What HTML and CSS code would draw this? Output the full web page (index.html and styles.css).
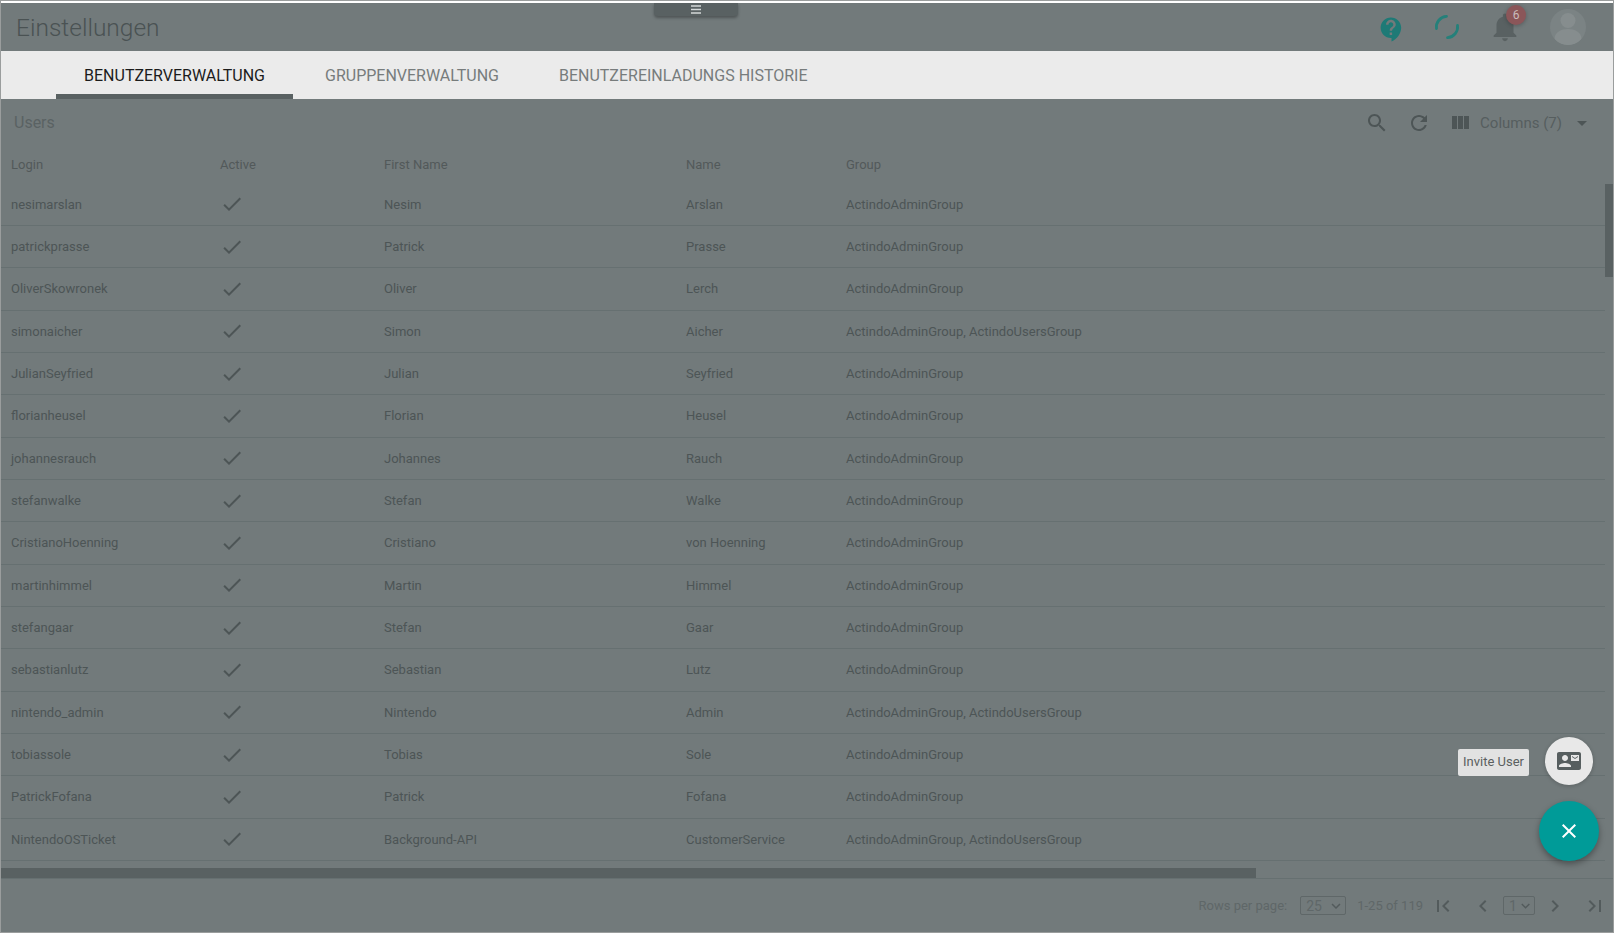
FILE: index.html
```html
<!DOCTYPE html>
<html>

<head>
  <meta charset="utf-8">
  <title>Einstellungen</title>
  <link rel="stylesheet" href="styles.css">
</head>

<body>
  <div class="app">
    <header class="topbar">
      <h1 class="page-title">Einstellungen</h1>
      <div class="menu-handle">
        <svg width="12" height="10" viewBox="0 0 12 10"><path d="M1 1h10M1 4.5h10M1 8h10" stroke="#d4d8d8" stroke-width="1.6"/></svg>
      </div>
      <div class="topbar-icons">
        <svg class="icon-help" width="29" height="29" viewBox="0 0 24 24"><path fill="#1e7a76" d="M11.5 2C6.81 2 3 5.81 3 10.5S6.81 19 11.5 19h.5v3c4.86-2.34 8-7 8-11.5C20 5.81 16.19 2 11.5 2zm1 14.5h-2v-2h2v2zm0-3.5h-2c0-3.25 3-3 3-5 0-1.1-.9-2-2-2s-2 .9-2 2h-2c0-2.21 1.79-4 4-4s4 1.79 4 4c0 2.5-3 2.75-3 5z"/></svg>
        <svg class="icon-spinner" width="26" height="26" viewBox="0 0 26 26"><g fill="none" stroke="#25807a" stroke-width="2.800" stroke-linecap="round"><path d="M2.500 14.500A10.600 10.600 0 0 1 12.500 2.400"/><path d="M23.500 11.500A10.600 10.600 0 0 1 13.500 23.600"/></g></svg>
        <div class="bell">
          <svg width="34" height="34" viewBox="0 0 24 24"><path fill="#596162" d="M12 22c1.1 0 2-.9 2-2h-4c0 1.1.89 2 2 2zm6-6v-5c0-3.07-1.64-5.64-4.5-6.32V4c0-.83-.67-1.5-1.5-1.5s-1.5.67-1.5 1.5v.68C7.63 5.36 6 7.92 6 11v5l-2 2v1h16v-1l-2-2z"/></svg>
          <span class="badge">6</span>
        </div>
        <div class="avatar">
          <svg width="36" height="36" viewBox="0 0 36 36"><circle cx="18" cy="11.5" r="7.5" fill="#868d8e"/><path fill="#868d8e" d="M4.5 30c0-7 7-10 13.500-10s13.500 3 13.500 10c-3 4-8 6-13.500 6s-10.500-2-13.500-6z"/></svg>
        </div>
      </div>
    </header>

    <nav class="tabs">
      <a class="tab tab-active">BENUTZERVERWALTUNG</a>
      <a class="tab">GRUPPENVERWALTUNG</a>
      <a class="tab">BENUTZEREINLADUNGS HISTORIE</a>
    </nav>

    <main class="panel">
      <div class="toolbar">
        <span class="toolbar-title">Users</span>
        <div class="toolbar-actions">
          <svg class="tool-search" width="24" height="24" viewBox="0 0 24 24"><path d="M15.5 14h-.79l-.28-.27C15.41 12.59 16 11.11 16 9.500 16 5.910 13.090 3 9.500 3S3 5.910 3 9.500 5.910 16 9.500 16c1.610 0 3.090-.59 4.230-1.570l.27.28v.79l5 4.990L20.490 19l-4.990-5zm-6 0C7.010 14 5 11.990 5 9.500S7.010 5 9.500 5 14 7.010 14 9.500 11.990 14 9.500 14z"/></svg>
          <svg class="tool-refresh" width="24" height="24" viewBox="0 0 24 24"><path d="M17.650 6.350C16.200 4.900 14.210 4 12 4c-4.420 0-7.990 3.580-7.990 8s3.570 8 7.990 8c3.730 0 6.840-2.550 7.730-6h-2.080c-.82 2.330-3.040 4-5.650 4-3.310 0-6-2.690-6-6s2.690-6 6-6c1.660 0 3.140.69 4.220 1.780L13 11h7V4l-2.350 2.350z"/></svg>
          <svg class="tool-columns" width="24" height="24" viewBox="0 0 24 24"><path d="M10 18h5V5h-5v13zm-6 0h5V5H4v13zM16 5v13h5V5h-5z"/></svg>
          <span class="columns-label">Columns (7)</span>
          <svg class="tool-drop" width="24" height="24" viewBox="0 0 24 24"><path d="M7 10l5 5 5-5z"/></svg>
        </div>
      </div>

      <div class="table">
        <div class="row row-head">
          <span>Login</span><span>Active</span><span>First Name</span><span>Name</span><span>Group</span>
        </div>
        <div class="row"><span>nesimarslan</span><svg class="check" width="24" height="24" viewBox="0 0 24 24"><path d="M9 16.170L4.830 12l-1.420 1.410L9 19 21 7l-1.410-1.410z"/></svg><span>Nesim</span><span>Arslan</span><span>ActindoAdminGroup</span></div>
        <div class="row"><span>patrickprasse</span><svg class="check" width="24" height="24" viewBox="0 0 24 24"><path d="M9 16.170L4.830 12l-1.420 1.410L9 19 21 7l-1.410-1.410z"/></svg><span>Patrick</span><span>Prasse</span><span>ActindoAdminGroup</span></div>
        <div class="row"><span>OliverSkowronek</span><svg class="check" width="24" height="24" viewBox="0 0 24 24"><path d="M9 16.170L4.830 12l-1.420 1.410L9 19 21 7l-1.410-1.410z"/></svg><span>Oliver</span><span>Lerch</span><span>ActindoAdminGroup</span></div>
        <div class="row"><span>simonaicher</span><svg class="check" width="24" height="24" viewBox="0 0 24 24"><path d="M9 16.170L4.830 12l-1.420 1.410L9 19 21 7l-1.410-1.410z"/></svg><span>Simon</span><span>Aicher</span><span>ActindoAdminGroup, ActindoUsersGroup</span></div>
        <div class="row"><span>JulianSeyfried</span><svg class="check" width="24" height="24" viewBox="0 0 24 24"><path d="M9 16.170L4.830 12l-1.420 1.410L9 19 21 7l-1.410-1.410z"/></svg><span>Julian</span><span>Seyfried</span><span>ActindoAdminGroup</span></div>
        <div class="row"><span>florianheusel</span><svg class="check" width="24" height="24" viewBox="0 0 24 24"><path d="M9 16.170L4.830 12l-1.420 1.410L9 19 21 7l-1.410-1.410z"/></svg><span>Florian</span><span>Heusel</span><span>ActindoAdminGroup</span></div>
        <div class="row"><span>johannesrauch</span><svg class="check" width="24" height="24" viewBox="0 0 24 24"><path d="M9 16.170L4.830 12l-1.420 1.410L9 19 21 7l-1.410-1.410z"/></svg><span>Johannes</span><span>Rauch</span><span>ActindoAdminGroup</span></div>
        <div class="row"><span>stefanwalke</span><svg class="check" width="24" height="24" viewBox="0 0 24 24"><path d="M9 16.170L4.830 12l-1.420 1.410L9 19 21 7l-1.410-1.410z"/></svg><span>Stefan</span><span>Walke</span><span>ActindoAdminGroup</span></div>
        <div class="row"><span>CristianoHoenning</span><svg class="check" width="24" height="24" viewBox="0 0 24 24"><path d="M9 16.170L4.830 12l-1.420 1.410L9 19 21 7l-1.410-1.410z"/></svg><span>Cristiano</span><span>von Hoenning</span><span>ActindoAdminGroup</span></div>
        <div class="row"><span>martinhimmel</span><svg class="check" width="24" height="24" viewBox="0 0 24 24"><path d="M9 16.170L4.830 12l-1.420 1.410L9 19 21 7l-1.410-1.410z"/></svg><span>Martin</span><span>Himmel</span><span>ActindoAdminGroup</span></div>
        <div class="row"><span>stefangaar</span><svg class="check" width="24" height="24" viewBox="0 0 24 24"><path d="M9 16.170L4.830 12l-1.420 1.410L9 19 21 7l-1.410-1.410z"/></svg><span>Stefan</span><span>Gaar</span><span>ActindoAdminGroup</span></div>
        <div class="row"><span>sebastianlutz</span><svg class="check" width="24" height="24" viewBox="0 0 24 24"><path d="M9 16.170L4.830 12l-1.420 1.410L9 19 21 7l-1.410-1.410z"/></svg><span>Sebastian</span><span>Lutz</span><span>ActindoAdminGroup</span></div>
        <div class="row"><span>nintendo_admin</span><svg class="check" width="24" height="24" viewBox="0 0 24 24"><path d="M9 16.170L4.830 12l-1.420 1.410L9 19 21 7l-1.410-1.410z"/></svg><span>Nintendo</span><span>Admin</span><span>ActindoAdminGroup, ActindoUsersGroup</span></div>
        <div class="row"><span>tobiassole</span><svg class="check" width="24" height="24" viewBox="0 0 24 24"><path d="M9 16.170L4.830 12l-1.420 1.410L9 19 21 7l-1.410-1.410z"/></svg><span>Tobias</span><span>Sole</span><span>ActindoAdminGroup</span></div>
        <div class="row"><span>PatrickFofana</span><svg class="check" width="24" height="24" viewBox="0 0 24 24"><path d="M9 16.170L4.830 12l-1.420 1.410L9 19 21 7l-1.410-1.410z"/></svg><span>Patrick</span><span>Fofana</span><span>ActindoAdminGroup</span></div>
        <div class="row"><span>NintendoOSTicket</span><svg class="check" width="24" height="24" viewBox="0 0 24 24"><path d="M9 16.170L4.830 12l-1.420 1.410L9 19 21 7l-1.410-1.410z"/></svg><span>Background-API</span><span>CustomerService</span><span>ActindoAdminGroup, ActindoUsersGroup</span></div>
        <div class="scroll-v"></div>
      </div>

      <div class="scroll-h"><div class="scroll-h-thumb"></div></div>

      <footer class="pager">
        <span class="pager-label">Rows per page:</span>
        <span class="pager-select pager-select-rows">25 <svg width="18" height="18" viewBox="0 0 24 24"><path d="M16.590 8.590L12 13.170 7.410 8.590 6 10l6 6 6-6z"/></svg></span>
        <span class="pager-range">1-25 of 119</span>
        <svg class="pager-first" width="24" height="24" viewBox="0 0 24 24"><path d="M18.410 16.590L13.820 12l4.590-4.590L17 6l-6 6 6 6zM6 6h2v12H6z"/></svg>
        <svg class="pager-prev" width="24" height="24" viewBox="0 0 24 24"><path d="M15.410 7.410L14 6l-6 6 6 6 1.410-1.410L10.830 12z"/></svg>
        <span class="pager-select pager-select-page">1 <svg width="18" height="18" viewBox="0 0 24 24"><path d="M16.590 8.590L12 13.170 7.410 8.590 6 10l6 6 6-6z"/></svg></span>
        <svg class="pager-next" width="24" height="24" viewBox="0 0 24 24"><path d="M10 6L8.590 7.410 13.170 12l-4.580 4.590L10 18l6-6z"/></svg>
        <svg class="pager-last" width="24" height="24" viewBox="0 0 24 24"><path d="M5.590 7.410L10.180 12l-4.590 4.590L7 18l6-6-6-6zM16 6h2v12h-2z"/></svg>
      </footer>
    </main>

    <div class="tooltip">Invite User</div>
    <button class="fab-small">
      <svg width="24" height="24" viewBox="0 0 24 24"><path fill="#565e5f" d="M21 8V7l-3 2-3-2v1l3 2 3-2zm1-5H2C.9 3 0 3.9 0 5v14c0 1.100.9 2 2 2h20c1.100 0 1.990-.9 1.990-2L24 5c0-1.100-.9-2-2-2zM8 6c1.660 0 3 1.340 3 3s-1.340 3-3 3-3-1.340-3-3 1.340-3 3-3zm6 12H2v-1c0-2 4-3 6-3s6 1 6 3v1zm8-6h-8V6h8v6z"/></svg>
    </button>
    <button class="fab">
      <svg width="24" height="24" viewBox="0 0 24 24"><path fill="#fff" d="M19 6.410L17.590 5 12 10.590 6.410 5 5 6.410 10.590 12 5 17.590 6.410 19 12 13.410 17.590 19 19 17.590 13.410 12z"/></svg>
    </button>
  </div>
</body>

</html>
```

FILE: styles.css
```css
html,
body {
  margin: 0;
  height: 100%;
}

body {
  font-family: Roboto, sans-serif;
  color: #4d5556;
  overflow: hidden;
}

.app {
  position: relative;
  display: flex;
  flex-direction: column;
  height: 933px;
  box-sizing: border-box;
  border: 1px solid #9a9d9d;
  background: #727a7b;
  overflow: hidden;
}

/* top bar */
.topbar {
  display: flex;
  align-items: center;
  justify-content: space-between;
  height: 48px;
  flex-shrink: 0;
  border-top: 2px solid #ffffff;
  background: #727a7b;
}

.page-title {
  margin: 0 0 0 15px;
  font-size: 24.5px;
  font-weight: 300;
  color: #4a5253;
}

.menu-handle {
  position: absolute;
  top: 2px;
  left: 653px;
  width: 84px;
  height: 13px;
  display: flex;
  align-items: center;
  justify-content: center;
  background: #596162;
  border-radius: 0 0 4px 4px;
  box-shadow: 0 2px 3px rgba(0, 0, 0, 0.3);
}

.topbar-icons {
  display: flex;
  align-items: center;
  height: 100%;
}

.icon-help {
  margin-top: 4px;
  margin-right: 28px;
}

.icon-spinner {
  margin-right: 28px;
}

.bell {
  position: relative;
  height: 34px;
  margin-right: 28px;
}

.bell svg {
  display: block;
}

.badge {
  position: absolute;
  top: -5px;
  right: -4px;
  width: 20px;
  height: 20px;
  border-radius: 50%;
  background: #8b5659;
  color: #c9bcbc;
  font-size: 12px;
  line-height: 20px;
  text-align: center;
  box-shadow: 0 1px 4px rgba(0, 0, 0, 0.25);
}

.avatar {
  width: 36px;
  height: 36px;
  margin-right: 27px;
  border-radius: 50%;
  background: #7b8384;
  overflow: hidden;
}

.avatar svg {
  display: block;
}

/* tabs */
.tabs {
  display: flex;
  height: 48px;
  flex-shrink: 0;
  padding-left: 55px;
  background: #ebebeb;
}

.tab {
  display: flex;
  align-items: center;
  justify-content: center;
  box-sizing: border-box;
  height: 48px;
  padding: 6px 28px 0 32px;
  font-size: 16px;
  color: #777c7c;
  border-bottom: 5px solid transparent;
}

.tab-active {
  width: 237px;
  padding: 6px 0 0;
  color: #1c1c1c;
  border-bottom-color: #596162;
}

/* panel */
.panel {
  flex: 1;
  display: flex;
  flex-direction: column;
  min-height: 0;
}

.toolbar {
  display: flex;
  align-items: center;
  justify-content: space-between;
  height: 46px;
  flex-shrink: 0;
  padding: 0 19px 0 13px;
}

.toolbar-title {
  font-size: 16px;
  color: #5a6263;
}

.toolbar-actions {
  display: flex;
  align-items: center;
  padding-top: 1px;
}

.toolbar-actions svg {
  fill: #4d5556;
}

.tool-search {
  margin-right: 18px;
}

.tool-refresh {
  margin-right: 17px;
}

.tool-columns {
  margin-right: 8px;
}

.columns-label {
  margin-right: 8px;
  font-size: 15px;
  color: #565e5f;
}

.table {
  position: relative;
  flex: 1;
  min-height: 0;
  overflow: hidden;
}

.row {
  display: grid;
  grid-template-columns: 209px 164px 302px 160px 1fr;
  align-items: center;
  box-sizing: border-box;
  height: 42.35px;
  margin-right: 8px;
  padding-left: 10px;
  font-size: 13px;
  border-bottom: 1px solid #667071;
}

.row-head {
  height: 38.5px;
  border-bottom: 0;
  color: #52595a;
}

.check {
  fill: #4d5556;
}

.scroll-v {
  position: absolute;
  top: 39px;
  right: 0;
  width: 8px;
  height: 93px;
  background: #596162;
}

.scroll-h {
  height: 10px;
  flex-shrink: 0;
  border-bottom: 1px solid #667071;
}

.scroll-h-thumb {
  width: 1255px;
  height: 10px;
  background: #596162;
}

/* pager */
.pager {
  display: flex;
  align-items: center;
  justify-content: flex-end;
  height: 53px;
  flex-shrink: 0;
  padding-right: 6px;
  font-size: 13px;
  color: #5f6768;
}

.pager svg {
  fill: #535b5c;
}

.pager-label {
  margin-right: 13px;
}

.pager-select {
  display: flex;
  align-items: center;
  justify-content: space-between;
  box-sizing: border-box;
  height: 19px;
  padding: 0 0 0 5px;
  border: 1px solid #5f6768;
  border-radius: 2px;
  font-size: 14px;
}

.pager-select-rows {
  width: 46px;
}

.pager-select-page {
  width: 32px;
}

.pager-range {
  margin: 0 8px 0 11px;
}

.pager-prev {
  margin-left: 16px;
  margin-right: 8px;
}

.pager-next {
  margin-left: 8px;
  margin-right: 16px;
}

/* floating buttons */
.fab,
.fab-small {
  position: absolute;
  display: flex;
  align-items: center;
  justify-content: center;
  padding: 0;
  border: 0;
  border-radius: 50%;
}

.fab {
  top: 800px;
  right: 14px;
  width: 60px;
  height: 60px;
  background: #009b98;
  box-shadow: 0 3px 6px rgba(0, 0, 0, 0.35);
}

.fab-small {
  top: 736px;
  right: 20px;
  width: 48px;
  height: 48px;
  background: #e8e8e8;
  box-shadow: 0 1px 4px rgba(0, 0, 0, 0.2);
}

.tooltip {
  position: absolute;
  top: 748px;
  right: 84px;
  width: 71px;
  height: 27px;
  background: #e2e2e2;
  border-radius: 2px;
  color: #5a5f60;
  font-size: 13px;
  line-height: 26px;
  text-align: center;
}
```
